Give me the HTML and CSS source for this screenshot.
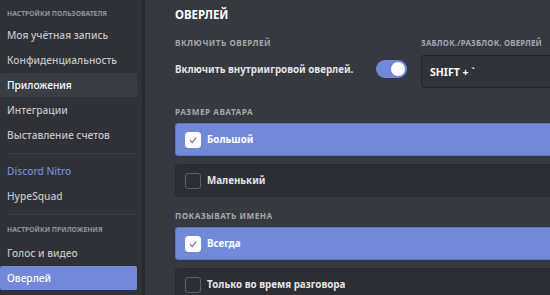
FILE: index.html
```html
<!DOCTYPE html>
<html lang="ru">
  <head>
    <meta charset="UTF-8" />
    <meta name="viewport" content="width=device-width, initial-scale=1.0" />
    <title>Настройки — Оверлей</title>
    <link rel="stylesheet" href="styles.css">
  </head>
  <body>
    <div class="app">
      <nav class="sidebar">
        <div class="side-header">Настройки пользователя</div>
        <div class="side-item">Моя учётная запись</div>
        <div class="side-item">Конфиденциальность</div>
        <div class="side-item active">Приложения</div>
        <div class="side-item">Интеграции</div>
        <div class="side-item">Выставление счетов</div>
        <div class="side-sep"></div>
        <div class="side-item nitro">Discord Nitro</div>
        <div class="side-item">HypeSquad</div>
        <div class="side-sep"></div>
        <div class="side-header">Настройки приложения</div>
        <div class="side-item">Голос и видео</div>
        <div class="side-item selected">Оверлей</div>
      </nav>

      <main class="content">
        <h2 class="title">Оверлей</h2>

        <div class="two-cols">
          <div class="col-left">
            <div class="label">Включить оверлей</div>
            <div class="switch-row">
              <span>Включить внутриигровой оверлей.</span>
              <span class="switch"><span class="knob"></span></span>
            </div>
          </div>
          <div class="col-right">
            <div class="label">Заблок./разблок. оверлей</div>
            <div class="keybind">SHIFT + `</div>
          </div>
        </div>

        <div class="label section">Размер аватара</div>
        <div class="option checked">
          <span class="box">
            <svg width="10" height="10" viewBox="0 0 10 10"><polyline points="2,5.2 4.2,7.4 8.2,2.6" fill="none" stroke="#8d7aa8" stroke-width="1.4" /></svg>
          </span>
          Большой
        </div>
        <div class="option">
          <span class="box"></span>
          Маленький
        </div>

        <div class="label section">Показывать имена</div>
        <div class="option checked">
          <span class="box">
            <svg width="10" height="10" viewBox="0 0 10 10"><polyline points="2,5.2 4.2,7.4 8.2,2.6" fill="none" stroke="#8d7aa8" stroke-width="1.4" /></svg>
          </span>
          Всегда
        </div>
        <div class="option">
          <span class="box"></span>
          Только во время разговора
        </div>
      </main>
    </div>
  </body>
</html>
```

FILE: styles.css
```css
body {
  margin: 0;
  padding: 0;
  background-color: #36393f;
  font-family: "Noto Sans", "Open Sans", sans-serif;
  overflow: hidden;
}

.app {
  display: flex;
  width: 550px;
  height: 295px;
  overflow: hidden;
}

.sidebar {
  width: 145px;
  flex-shrink: 0;
  background-color: #2f3136;
  border-right: 3px solid #28292d;
  display: flex;
  flex-direction: column;
  padding-top: 8px;
  box-sizing: border-box;
}

.side-header {
  font-size: 6.8px;
  font-weight: 700;
  text-transform: uppercase;
  color: #8e9297;
  padding-left: 7px;
  height: 12px;
  line-height: 12px;
  margin-bottom: 3px;
}

.side-item {
  font-size: 10.2px;
  font-weight: 500;
  color: #c2c4c7;
  height: 24px;
  line-height: 24px;
  padding-left: 7px;
  margin-bottom: 1px;
  width: 137px;
  box-sizing: border-box;
  border-radius: 2px;
}

.side-item.active {
  background-color: #3a3d43;
  color: #ffffff;
}

.side-item.selected {
  background-color: #7289da;
  color: #ffffff;
}

.side-item.nitro {
  color: #7289da;
}

.side-sep {
  height: 1px;
  background-color: #3b3e44;
  margin: 5px 8px 5px 7px;
}

.sidebar .side-sep + .side-header {
  margin-top: 4px;
  margin-bottom: 5px;
}

.content {
  padding: 7px 0 0 30px;
  width: 520px;
  flex-shrink: 0;
}

.title {
  margin: 0;
  font-size: 11.5px;
  font-weight: 700;
  line-height: 16px;
  text-transform: uppercase;
  color: #ffffff;
}

.label {
  font-size: 8.2px;
  font-weight: 700;
  text-transform: uppercase;
  color: #a3a6aa;
  line-height: 12px;
  letter-spacing: 0.5px;
}

.two-cols {
  display: flex;
  gap: 14px;
  margin-top: 14px;
}

.col-left {
  width: 232px;
}

.col-left .label {
  margin-bottom: 8px;
}

.switch-row {
  display: flex;
  justify-content: space-between;
  align-items: center;
  height: 24px;
  font-size: 9.8px;
  font-weight: 700;
  color: #e3e4e6;
}

.switch {
  width: 31px;
  height: 18px;
  border-radius: 9px;
  background-color: #7289da;
  display: flex;
  align-items: center;
  justify-content: flex-end;
  padding: 0 2px;
  box-sizing: border-box;
}

.knob {
  width: 14px;
  height: 14px;
  border-radius: 50%;
  background-color: #ffffff;
}

.col-right {
  width: 240px;
}

.col-right .label {
  font-size: 7.9px;
  letter-spacing: 0.2px;
}

.keybind {
  margin-top: 6px;
  height: 33px;
  background-color: #303338;
  border: 1px solid #232529;
  border-radius: 3px;
  box-sizing: border-box;
  display: flex;
  align-items: center;
  padding-left: 8px;
  font-size: 10.5px;
  font-weight: 700;
  color: #ffffff;
}

.label.section {
  margin-top: 18px;
  margin-bottom: 5px;
}

.option + .label.section {
  margin-top: 13px;
}

.option {
  display: flex;
  align-items: center;
  gap: 6px;
  height: 33px;
  padding-left: 9px;
  margin-bottom: 8px;
  background-color: #2c2e33;
  border: 1px solid #292b2f;
  border-radius: 3px;
  box-sizing: border-box;
  font-size: 9.8px;
  font-weight: 700;
  color: #e3e4e6;
}

.option.checked {
  background-color: #7289da;
  border-color: #5d72bd;
  color: #ffffff;
}

.box {
  width: 16px;
  height: 16px;
  border-radius: 3px;
  border: 1px solid #5c5f66;
  box-sizing: border-box;
  display: flex;
  align-items: center;
  justify-content: center;
}

.option.checked .box {
  background-color: #ffffff;
  border-color: #ffffff;
}
```
